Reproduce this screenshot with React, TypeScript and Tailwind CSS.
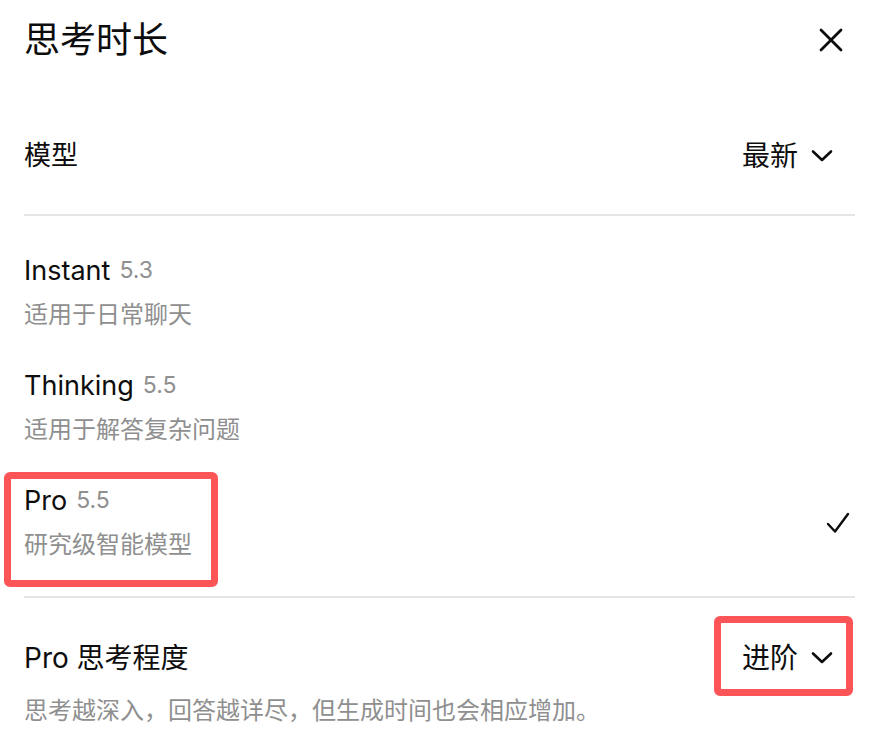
import React from "react";

const font = { fontFamily: 'Inter, "Noto Sans CJK SC", sans-serif' };

function Chevron() {
  return (
    <svg width="22" height="14" viewBox="0 0 22 14" fill="none" className="ml-[13px]">
      <path d="M2 2.5 L11 11 L20 2.5" stroke="#0d0d0d" strokeWidth="2.6" strokeLinecap="round" strokeLinejoin="round" />
    </svg>
  );
}

function Option({ name, ver, desc, checked }: { name: string; ver: string; desc: string; checked?: boolean }) {
  return (
    <div className="flex items-center justify-between">
      <div className="flex flex-col gap-[11px]">
        <div className="h-[34px] flex items-center gap-[9px]">
          <span className="text-[27px] text-[#0d0d0d] leading-none">{name}</span>
          <span className="text-[23px] text-[#8f8f8f] leading-none">{ver}</span>
        </div>
        <div className="h-[34px] flex items-center text-[24px] text-[#8f8f8f]">{desc}</div>
      </div>
      {checked && (
        <svg width="26" height="24" viewBox="0 0 26 24" fill="none" className="mr-[4px]">
          <path d="M3 13 L10 20.5 L23 3" stroke="#0d0d0d" strokeWidth="2.4" strokeLinecap="round" strokeLinejoin="round" />
        </svg>
      )}
    </div>
  );
}

export default function App() {
  return (
    <div className="relative w-[882px] h-[754px] bg-white overflow-hidden" style={font}>
      <div className="pl-[24px] pr-[27px]">
        <div className="h-[80px] flex items-center justify-between">
          <span className="text-[36px] text-[#0d0d0d]">思考时长</span>
          <svg width="26" height="26" viewBox="0 0 26 26" fill="none" className="mr-[11px]">
            <path d="M3 3 L23 23 M23 3 L3 23" stroke="#0d0d0d" strokeWidth="2.8" strokeLinecap="round" />
          </svg>
        </div>
        <div className="mt-[36px] h-[80px] flex items-center justify-between">
          <span className="text-[27px] text-[#0d0d0d]">模型</span>
          <div className="flex items-center pr-[22px]">
            <span className="text-[28px] text-[#0d0d0d]">最新</span>
            <Chevron />
          </div>
        </div>
        <div className="mt-[18px] h-[2px] bg-[#e5e5e5]" />
        <div className="mt-[37px] flex flex-col gap-[36px]">
          <Option name="Instant" ver="5.3" desc="适用于日常聊天" />
          <Option name="Thinking" ver="5.5" desc="适用于解答复杂问题" />
          <Option name="Pro" ver="5.5" desc="研究级智能模型" checked />
        </div>
        <div className="mt-[34px] h-[2px] bg-[#e5e5e5]" />
        <div className="mt-[43px] h-[34px] flex items-center justify-between">
          <span className="text-[28px] text-[#0d0d0d]">Pro 思考程度</span>
          <div className="flex items-center pr-[22px]">
            <span className="text-[28px] text-[#0d0d0d]">进阶</span>
            <Chevron />
          </div>
        </div>
        <div className="mt-[19px] h-[34px] flex items-center text-[24px] text-[#8f8f8f]">
          思考越深入，回答越详尽，但生成时间也会相应增加。
        </div>
      </div>
      <div className="absolute left-[4px] top-[472px] w-[214px] h-[115px] border-[7px] border-[#fd5457] rounded-[6px]" />
      <div className="absolute left-[714px] top-[616px] w-[139px] h-[80px] border-[7px] border-[#fd5457] rounded-[6px]" />
    </div>
  );
}
